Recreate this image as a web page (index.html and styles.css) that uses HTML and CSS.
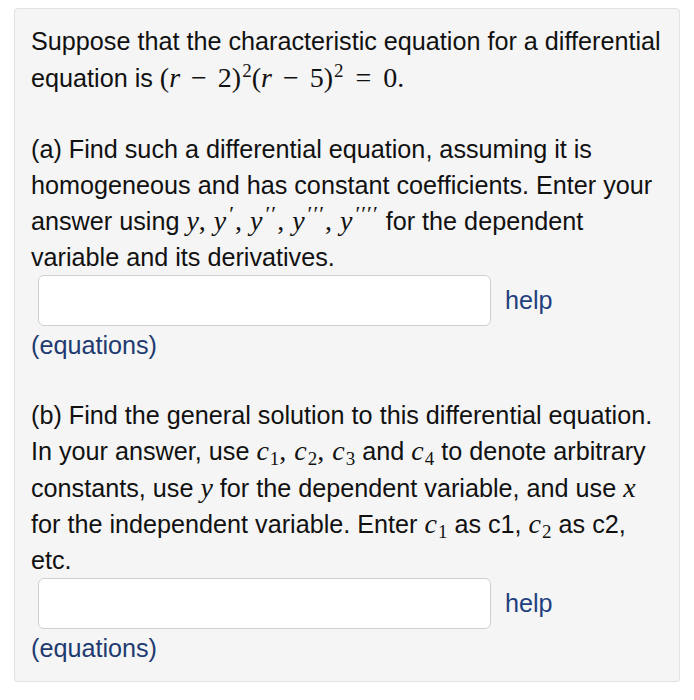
FILE: index.html
```html
<!DOCTYPE html>
<html>
<head>
<meta charset="utf-8">
<link rel="stylesheet" href="styles.css">
</head>
<body>
<div class="card">
  <p class="para">Suppose that the characteristic equation for a differential equation is <span class="m">(<i>r</i><span class="op">−</span>2)<sup>2</sup>(<i>r</i><span class="op">−</span>5)<sup>2</sup><span class="rel">=</span>0.</span></p>
  <p class="para gap">(a) Find such a differential equation, assuming it is homogeneous and has constant coefficients. Enter your answer using <span class="m"><i>y</i>,<span class="th"></span><i>y</i><sup class="pr">′</sup>,<span class="th"></span><i>y</i><sup class="pr">′′</sup>,<span class="th"></span><i>y</i><sup class="pr">′′′</sup>,<span class="th"></span><i>y</i><sup class="pr">′′′′</sup></span> for the dependent variable and its derivatives.</p>
  <div class="answer"><div class="box"></div><span class="help">help</span></div>
  <div class="kind">(equations)</div>
  <p class="para gap2">(b) Find the general solution to this differential equation. In your answer, use <span class="m"><i>c</i><sub>1</sub>,<span class="th"></span><i>c</i><sub>2</sub>,<span class="th"></span><i>c</i><sub>3</sub></span> and <span class="m"><i>c</i><sub>4</sub></span> to denote arbitrary constants, use <span class="m"><i>y</i></span> for the dependent variable, and use <span class="m"><i>x</i></span> for the independent variable. Enter <span class="m"><i>c</i><sub>1</sub></span> as c1, <span class="m"><i>c</i><sub>2</sub></span> as c2, etc.</p>
  <div class="answer"><div class="box"></div><span class="help">help</span></div>
  <div class="kind">(equations)</div>
</div>
</body>
</html>
```
FILE: styles.css
```css
html, body {
  margin: 0;
  padding: 0;
  background: #ffffff;
}
body {
  font-family: "Liberation Sans", Arial, sans-serif;
  color: #111;
}
.card {
  margin: 8px 14px 0 14px;
  width: 666px;
  height: 674px;
  box-sizing: border-box;
  background: #f5f5f5;
  border: 1px solid #e2e2e2;
  border-radius: 4px;
  box-shadow: 0 1px 1px rgba(0,0,0,0.05);
  padding: 15px 10px 0 16px;
  font-size: 25.2px;
  line-height: 35.5px;
}
.para {
  margin: 0;
}
.gap {
  margin-top: 36px;
}
.gap2 {
  margin-top: 34px;
}
.m {
  font-family: "Liberation Serif", "Times New Roman", serif;
  font-size: 28px;
  white-space: nowrap;
}
.m i {
  font-style: italic;
}
.m sup, .m sub {
  font-size: 19px;
  line-height: 0;
}
.m sup {
  vertical-align: 10px;
  margin-left: 1px;
}
.m sub {
  vertical-align: -5px;
  margin-left: 1px;
}
.m sup.pr {
  font-size: 22px;
  vertical-align: 9px;
  letter-spacing: 1px;
  margin-left: 3px;
}
.op {
  margin: 0 11px;
}
.rel {
  margin: 0 12px;
}
.th {
  display: inline-block;
  width: 8px;
}
.answer {
  display: flex;
  align-items: center;
  margin-left: 7px;
}
.box {
  width: 453px;
  height: 51px;
  box-sizing: border-box;
  background: #fff;
  border: 1px solid #cfcfcf;
  border-radius: 6px;
}
.help {
  margin-left: 14px;
  color: #1f3f7f;
}
.kind {
  color: #1e3a70;
  margin-top: 2px;
}
```
